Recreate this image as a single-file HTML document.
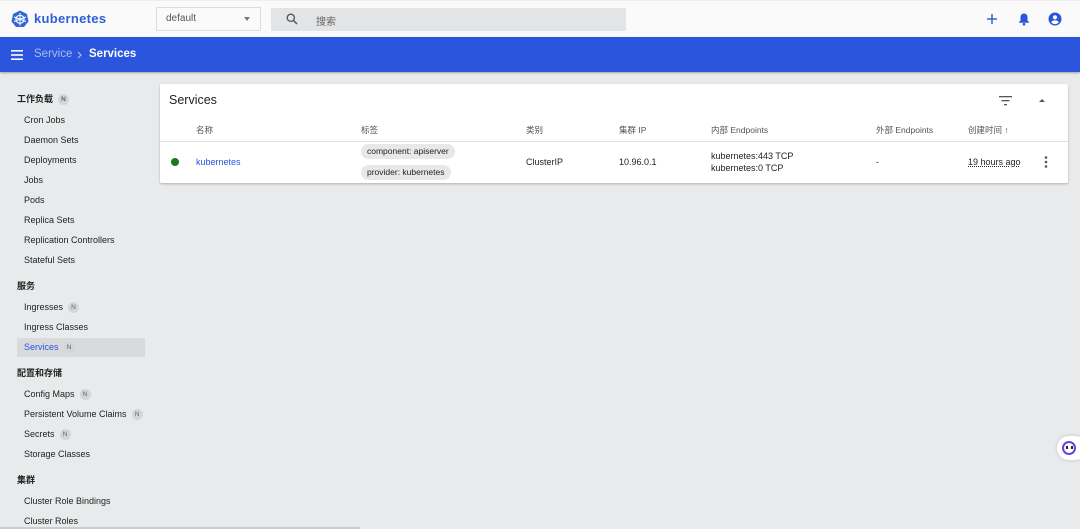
<!DOCTYPE html>
<html><head><meta charset="utf-8"><style>
*{box-sizing:border-box;margin:0;padding:0}
body{width:1080px;height:529px;overflow:hidden;background:#e8eaeb;font-family:"Liberation Sans","Noto Sans CJK SC",sans-serif;color:#222;position:relative}
.top{position:absolute;left:0;top:0;width:1080px;height:37px;background:#fafafa;border-top:1px solid #eee}
.blue{position:absolute;left:0;top:37px;width:1080px;height:35px;background:#2a55dc;box-shadow:0 1px 2px rgba(0,0,0,.3)}
.a{position:absolute;white-space:nowrap}
.sb{font-size:9px;color:#222}
.h{font-size:9px;font-weight:bold}
.n{display:inline-block;width:11px;height:11px;border-radius:50%;background:#d3d5d6;color:#666;font-size:6.5px;text-align:center;line-height:11px;margin-left:5px;vertical-align:middle}
.card{position:absolute;left:160px;top:84px;width:908px;height:99px;background:#fff;box-shadow:0 1px 2px rgba(0,0,0,.25);border-radius:2px}
.th{font-size:8.5px;color:#555;top:124px}
.td{font-size:9px;color:#222}
.chip{position:absolute;background:#e8e8e8;border-radius:8px;font-size:8.5px;padding:0 6px;height:15px;line-height:15px}
</style></head><body>
<div class="top"></div>
<svg class="a" style="left:11px;top:10px" width="18" height="18" viewBox="0 0 18 18"><polygon points="9,0.5 16,4 17.5,11.5 13,17 5,17 0.5,11.5 2,4" fill="#3367d6"/><circle cx="9" cy="9.3" r="4" fill="none" stroke="#fff" stroke-width="1.2"/><g stroke="#fff" stroke-width="1"><line x1="9" y1="3" x2="9" y2="15.5"/><line x1="3" y1="7" x2="15" y2="11.5"/><line x1="15" y1="7" x2="3" y2="11.5"/></g></svg>
<div class="a" style="left:34px;top:11px;font-size:13px;font-weight:bold;color:#2f5fd6;letter-spacing:.3px">kubernetes</div>
<div class="a" style="left:156px;top:7px;width:105px;height:24px;border:1px solid #ddd;background:#fafafa"></div>
<div class="a" style="left:166px;top:13px;font-size:10px;color:#555">default</div>
<div class="a" style="left:244px;top:17px;width:0;height:0;border-left:3.5px solid transparent;border-right:3.5px solid transparent;border-top:4px solid #777"></div>
<div class="a" style="left:271px;top:8px;width:355px;height:23px;background:#e3e4e5"></div>
<svg class="a" style="left:286px;top:13px" width="12" height="12" viewBox="0 0 12 12"><circle cx="4.8" cy="4.8" r="3.6" fill="none" stroke="#555" stroke-width="1.3"/><line x1="7.5" y1="7.5" x2="11" y2="11" stroke="#555" stroke-width="1.5"/></svg>
<div class="a" style="left:316px;top:13px;font-size:10px;color:#666">搜索</div>
<svg class="a" style="left:987px;top:14px" width="10" height="10" viewBox="0 0 10 10"><rect x="4.3" y="0" width="1.4" height="10" fill="#2a55dc"/><rect x="0" y="4.3" width="10" height="1.4" fill="#2a55dc"/></svg>
<svg class="a" style="left:1018px;top:12px" width="12" height="14" viewBox="0 0 12 14"><path d="M6 1.5c-2.2 0-3.5 1.7-3.5 3.8v3.3L1 10v.8h10V10L9.5 8.6V5.3C9.5 3.2 8.2 1.5 6 1.5z" fill="#2a55dc"/><circle cx="6" cy="12.2" r="1.3" fill="#2a55dc"/></svg>
<svg class="a" style="left:1048px;top:12px" width="14" height="14" viewBox="0 0 14 14"><circle cx="7" cy="7" r="6.5" fill="#2a55dc"/><circle cx="7" cy="5.3" r="2.1" fill="#fff"/><path d="M3.2 10.3c1-1.5 2.3-2 3.8-2s2.8.5 3.8 2c-1 1.2-2.3 1.8-3.8 1.8s-2.8-.6-3.8-1.8z" fill="#fff"/></svg>
<div class="blue"></div>
<svg class="a" style="left:11px;top:50px" width="12" height="10" viewBox="0 0 12 10"><rect y="0" width="12" height="1.6" fill="#fff"/><rect y="4.2" width="12" height="1.6" fill="#fff"/><rect y="8.4" width="12" height="1.6" fill="#fff"/></svg>
<div class="a" style="left:34px;top:48px;font-size:11.5px;color:#a9bdf0">Service</div>
<svg class="a" style="left:77px;top:51px" width="5" height="8" viewBox="0 0 5 8"><path d="M1 1l3 3-3 3" fill="none" stroke="#a9bdf0" stroke-width="1.2"/></svg>
<div class="a" style="left:89px;top:48px;font-size:11.5px;color:#fff;font-weight:bold">Services</div>

<div class="a h" style="left:17px;top:92px">工作负载<span class="n">N</span></div>
<div class="a sb" style="left:24px;top:115px">Cron Jobs</div>
<div class="a sb" style="left:24px;top:135px">Daemon Sets</div>
<div class="a sb" style="left:24px;top:155px">Deployments</div>
<div class="a sb" style="left:24px;top:175px">Jobs</div>
<div class="a sb" style="left:24px;top:195px">Pods</div>
<div class="a sb" style="left:24px;top:215px">Replica Sets</div>
<div class="a sb" style="left:24px;top:235px">Replication Controllers</div>
<div class="a sb" style="left:24px;top:255px">Stateful Sets</div>
<div class="a h" style="left:17px;top:279px">服务</div>
<div class="a sb" style="left:24px;top:302px">Ingresses<span class="n">N</span></div>
<div class="a sb" style="left:24px;top:322px">Ingress Classes</div>
<div class="a" style="left:17px;top:338px;width:128px;height:19px;background:#d9dadb"></div>
<div class="a sb" style="left:24px;top:342px;color:#2a55dc">Services<span class="n">N</span></div>
<div class="a h" style="left:17px;top:366px">配置和存储</div>
<div class="a sb" style="left:24px;top:389px">Config Maps<span class="n">N</span></div>
<div class="a sb" style="left:24px;top:409px">Persistent Volume Claims<span class="n">N</span></div>
<div class="a sb" style="left:24px;top:429px">Secrets<span class="n">N</span></div>
<div class="a sb" style="left:24px;top:449px">Storage Classes</div>
<div class="a h" style="left:17px;top:473px">集群</div>
<div class="a sb" style="left:24px;top:496px">Cluster Role Bindings</div>
<div class="a sb" style="left:24px;top:516px">Cluster Roles</div>

<div class="card"></div>
<div class="a" style="left:169px;top:93px;font-size:12.5px;color:#222">Services</div>
<svg class="a" style="left:999px;top:96px" width="13" height="10" viewBox="0 0 13 10"><rect x="0" y="0" width="13" height="1.3" fill="#555"/><rect x="2.5" y="4" width="8" height="1.3" fill="#555"/><rect x="5" y="8" width="3" height="1.3" fill="#555"/></svg>
<div class="a" style="left:1039px;top:99px;width:0;height:0;border-left:3px solid transparent;border-right:3px solid transparent;border-bottom:3.5px solid #555"></div>
<div class="a th" style="left:196px">名称</div>
<div class="a th" style="left:361px">标签</div>
<div class="a th" style="left:526px">类别</div>
<div class="a th" style="left:619px">集群 IP</div>
<div class="a th" style="left:711px">内部 Endpoints</div>
<div class="a th" style="left:876px">外部 Endpoints</div>
<div class="a th" style="left:968px">创建时间 ↑</div>
<div class="a" style="left:160px;top:141px;width:908px;height:1px;background:#e0e0e0"></div>
<div class="a" style="left:171px;top:158px;width:8px;height:8px;border-radius:50%;background:#1b7a1b"></div>
<div class="a td" style="left:196px;top:157px;color:#2a55dc">kubernetes</div>
<div class="chip" style="left:361px;top:144px">component: apiserver</div>
<div class="chip" style="left:361px;top:165px">provider: kubernetes</div>
<div class="a td" style="left:526px;top:157px">ClusterIP</div>
<div class="a td" style="left:619px;top:157px">10.96.0.1</div>
<div class="a td" style="left:711px;top:151px">kubernetes:443 TCP</div>
<div class="a td" style="left:711px;top:163px">kubernetes:0 TCP</div>
<div class="a td" style="left:876px;top:157px">-</div>
<div class="a td" style="left:968px;top:157px;text-decoration:underline dotted">19 hours ago</div>
<svg class="a" style="left:1044px;top:156px" width="4" height="12" viewBox="0 0 4 12"><circle cx="2" cy="1.5" r="1.3" fill="#555"/><circle cx="2" cy="6" r="1.3" fill="#555"/><circle cx="2" cy="10.5" r="1.3" fill="#555"/></svg>
<div class="a" style="left:1057px;top:436px;width:30px;height:24px;border-radius:12px;background:#fff;box-shadow:0 0 4px rgba(0,0,0,.15)"></div>
<div class="a" style="left:1062px;top:441px;width:14px;height:14px;border-radius:50%;border:2px solid #6b3fe0"></div>
<div class="a" style="left:1066px;top:446px;width:2px;height:3px;background:#222"></div>
<div class="a" style="left:1071px;top:446px;width:2px;height:3px;background:#222"></div>
<div class="a" style="left:0;top:527px;width:360px;height:2px;background:#ccc"></div>
</body></html>
